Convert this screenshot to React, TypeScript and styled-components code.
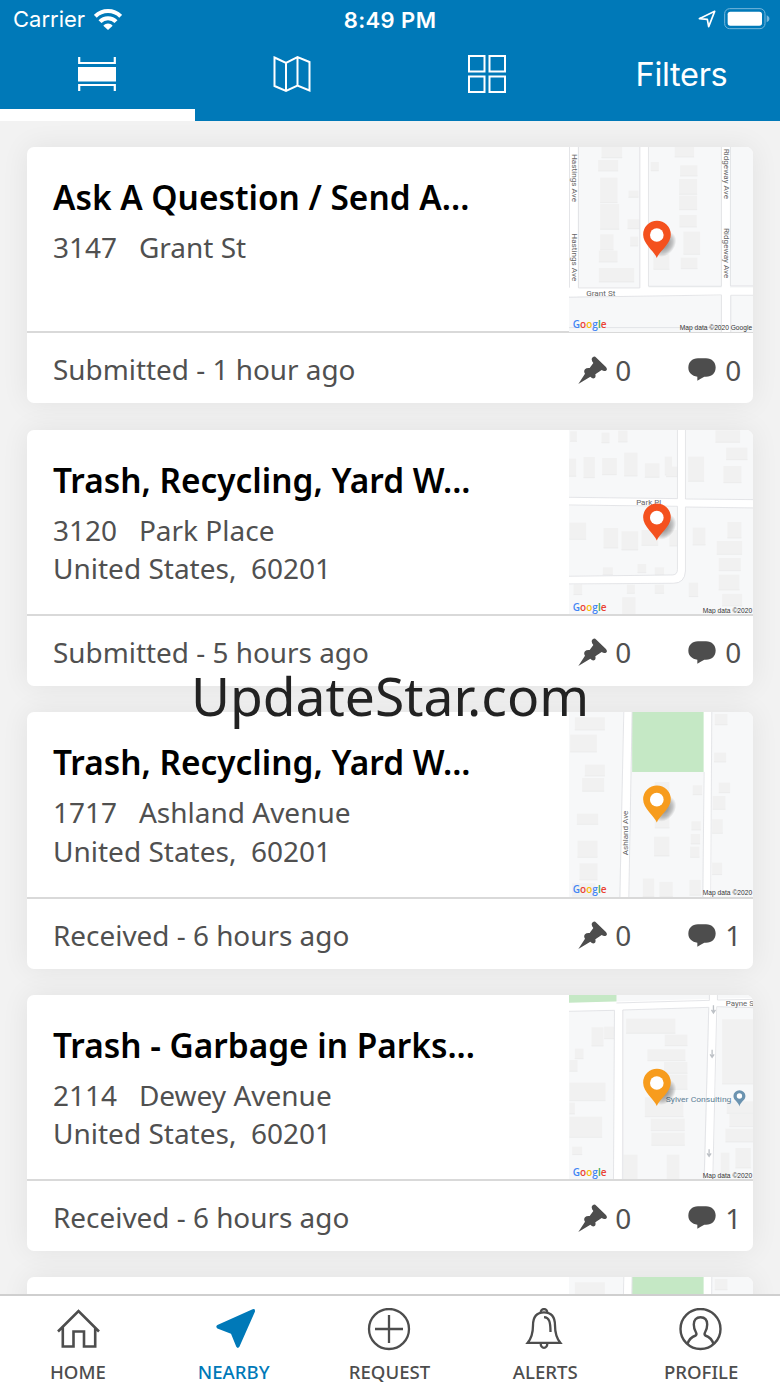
import React from 'react'
import styled, { createGlobalStyle } from 'styled-components'

type Rect = [number, number, number, number]

type MapData = {
  top: number
  blocks: Rect[]
  parks?: Rect[]
  roads: string[]
  edges: string[]
  labels: { x: number; y: number; text: string; rotate?: number; length: number; color?: string }[]
  credit: string
  pin: string
  place?: boolean
}

type Report = {
  id: number
  title: string
  address: string[]
  status: string
  votes: number
  comments: number
  map: MapData
}

const RED = '#f4511e'
const ORANGE = '#f79c1d'

const grantMap: MapData = {
  top: 21,
  blocks: [
    [124, 21, 62, 32], [114, 60, 60, 33], [120, 113, 52, 75], [120, 192, 57, 76], [120, 283, 40, 47],
    [116, 332, 56, 34], [116, 384, 106, 42], [344, 21, 58, 30], [360, 76, 52, 32], [357, 117, 54, 46],
    [357, 167, 54, 42], [358, 225, 52, 36], [370, 275, 50, 68], [362, 353, 50, 33], [280, 342, 48, 46],
    [202, 238, 36, 28], [205, 152, 30, 20], [272, 66, 24, 26], [210, 290, 24, 28],
  ],
  roads: ['M40 21V470', 'M253 21V455', 'M497 21V576', 'M26 456H582'],
  edges: [
    'M28 21V443', 'M55 21V444H239V21', 'M265 21V439H484V21', 'M511 21V438H582', 'M26 472L484 465V576',
    'M582 466H512V576', 'M26 563H484',
  ],
  labels: [
    { x: 35, y: 42, text: 'Hastings Ave', rotate: 90, length: 144 },
    { x: 35, y: 280, text: 'Hastings Ave', rotate: 90, length: 144 },
    { x: 493, y: 26, text: 'Ridgeway Ave', rotate: 90, length: 151 },
    { x: 491, y: 264, text: 'Ridgeway Ave', rotate: 90, length: 151 },
    { x: 78, y: 467, text: 'Grant St', length: 88 },
  ],
  credit: 'Map data ©2020 Google',
  pin: RED,
}

const parkMap: MapData = {
  top: 22,
  blocks: [
    [26, 108, 22, 53], [70, 103, 34, 62], [126, 106, 44, 50], [192, 90, 40, 70], [254, 122, 44, 42],
    [314, 102, 22, 55], [318, 132, 52, 30], [384, 102, 48, 74], [466, 23, 74, 36], [498, 75, 64, 36],
    [490, 130, 54, 50], [28, 300, 50, 50], [130, 316, 44, 60], [184, 326, 50, 56], [244, 322, 50, 46],
    [328, 322, 28, 48], [398, 315, 38, 52], [502, 298, 42, 48], [470, 355, 76, 40], [476, 406, 66, 38],
    [476, 456, 62, 46], [486, 514, 60, 36], [386, 480, 28, 42], [186, 524, 40, 54], [232, 424, 26, 26],
    [284, 434, 28, 24], [128, 434, 30, 22], [40, 484, 26, 32], [200, 486, 24, 26], [284, 486, 28, 26],
    [124, 30, 24, 30], [174, 24, 28, 34], [30, 26, 20, 30],
  ],
  roads: ['M26 236L582 243', 'M364 20V440Q364 470 335 470L26 473'],
  edges: [
    'M26 224L352 228V20', 'M376 20V229L582 231', 'M26 247L352 251V440Q352 456 338 457L26 461',
    'M582 256L376 253V445Q374 482 340 482L26 484',
  ],
  labels: [{ x: 228, y: 248, text: 'Park Pl', length: 75 }],
  credit: 'Map data ©2020',
  pin: RED,
}

const ashlandMap: MapData = {
  top: 22,
  blocks: [
    [44, 38, 90, 38], [30, 90, 80, 52], [74, 180, 60, 34], [66, 220, 66, 40], [50, 327, 64, 32],
    [52, 408, 60, 50], [58, 476, 54, 50], [284, 232, 44, 26], [284, 330, 44, 40], [282, 396, 46, 58],
    [398, 242, 28, 28], [394, 350, 28, 26], [392, 388, 28, 30], [390, 426, 28, 32], [464, 28, 38, 32],
    [462, 144, 36, 28], [476, 234, 34, 30], [458, 274, 38, 40], [456, 344, 32, 42], [456, 474, 30, 36],
    [248, 522, 34, 54], [298, 532, 40, 44], [388, 526, 34, 46], [36, 536, 70, 38],
  ],
  parks: [[216, 22, 216, 180]],
  roads: ['M202 22L194 578', 'M443 22V578'],
  edges: ['M191 22L179 578', 'M216 22L206 578', 'M432 202L428 578', 'M455 22L452 578'],
  labels: [{ x: 204, y: 452, text: 'Ashland Ave', rotate: -90, length: 134 }],
  credit: 'Map data ©2020',
  pin: ORANGE,
}

const deweyMap: MapData = {
  top: 21,
  blocks: [
    [198, 92, 148, 44], [314, 140, 68, 33], [262, 184, 114, 34], [312, 222, 70, 34], [320, 260, 62, 44],
    [254, 328, 116, 58], [272, 392, 102, 36], [274, 434, 100, 38], [28, 284, 108, 54], [28, 386, 98, 62],
    [94, 118, 36, 56], [132, 116, 32, 36], [486, 94, 96, 194], [500, 340, 82, 36], [508, 378, 74, 38],
    [496, 422, 86, 40], [190, 500, 42, 76], [320, 500, 38, 76], [482, 494, 26, 74], [526, 480, 46, 60],
    [28, 216, 24, 34], [44, 182, 26, 30], [28, 344, 16, 34], [36, 476, 30, 24],
  ],
  parks: [[26, 21, 143, 27]],
  roads: ['M26 57L582 42', 'M175 55L172 577', 'M461 21L447 577'],
  edges: [
    'M26 70L163 67L160 577', 'M188 577V66L446 58L432 577', 'M458 577L470 56L582 59', 'M169 45L448 37V21',
    'M472 21V36L582 34',
  ],
  labels: [
    { x: 497, y: 54, text: 'Payne St', length: 92 },
    { x: 317, y: 341, text: 'Sylver Consulting', length: 197, color: '#5d7f97' },
  ],
  credit: 'Map data ©2020',
  pin: ORANGE,
  place: true,
}

const reports: Report[] = [
  {
    id: 1,
    title: 'Ask A Question / Send A...',
    address: ['3147   Grant St'],
    status: 'Submitted - 1 hour ago',
    votes: 0,
    comments: 0,
    map: grantMap,
  },
  {
    id: 2,
    title: 'Trash, Recycling, Yard W...',
    address: ['3120   Park Place', 'United States,  60201'],
    status: 'Submitted - 5 hours ago',
    votes: 0,
    comments: 0,
    map: parkMap,
  },
  {
    id: 3,
    title: 'Trash, Recycling, Yard W...',
    address: ['1717   Ashland Avenue', 'United States,  60201'],
    status: 'Received - 6 hours ago',
    votes: 0,
    comments: 1,
    map: ashlandMap,
  },
  {
    id: 4,
    title: 'Trash - Garbage in Parks...',
    address: ['2114   Dewey Avenue', 'United States,  60201'],
    status: 'Received - 6 hours ago',
    votes: 0,
    comments: 1,
    map: deweyMap,
  },
]

const googleLetters = [
  ['G', '#4285f4'],
  ['o', '#ea4335'],
  ['o', '#fbbc05'],
  ['g', '#4285f4'],
  ['l', '#34a853'],
  ['e', '#ea4335'],
]

const MiniMap = ({ map, bare }: { map: MapData; bare?: boolean }) => (
  <MapSvg viewBox={`26.5 ${map.top} 554 554`}>
    <defs>
      <radialGradient id="pinShadow">
        <stop offset="0.3" stopColor="#000" stopOpacity="0.36" />
        <stop offset="0.7" stopColor="#000" stopOpacity="0.2" />
        <stop offset="1" stopColor="#000" stopOpacity="0" />
      </radialGradient>
    </defs>
    <rect x="20" y="15" width="570" height="570" fill="#f7f8f9" />
    {map.blocks.map(([x, y, width, height], i) => (
      <g key={i}>
        <rect x={x} y={y} width={width} height={height} fill="#f1f1f1" />
        <path d={`M${x} ${y + height}h${width}`} stroke="#e8e8e9" strokeWidth="2" />
      </g>
    ))}
    {map.parks?.map(([x, y, width, height], i) => (
      <rect key={i} x={x} y={y} width={width} height={height} fill="#c5e8c5" />
    ))}
    {map.roads.map((d) => (
      <path key={d} d={d} fill="none" stroke="#fff" strokeWidth="25" />
    ))}
    {map.edges.map((d) => (
      <path key={d} d={d} fill="none" stroke="#dfe0e3" strokeWidth="2.5" />
    ))}
    {map.place && (
      <g>
        <path d="M460 52v22m-6-8l6 9l6-9M456 185v22m-6-8l6 9l6-9M447 484v20m-6-8l6 9l6-9" fill="none" stroke="#bdc1c6" strokeWidth="4" />
        <path d="M538 356c-3-16-18-18-18-32a18 17 0 0 1 36 0c0 14-15 16-18 32z" fill="#6b93b0" />
        <circle cx="538" cy="324" r="8" fill="#fff" />
      </g>
    )}
    {!bare && map.labels.map(({ x, y, text, rotate = 0, length, color }) => (
      <MapLabel
        key={`${x}-${y}`}
        transform={`translate(${x} ${y}) rotate(${rotate})`}
        textLength={length}
        lengthAdjust="spacingAndGlyphs"
        fill={color || '#666'}
      >
        {text}
      </MapLabel>
    ))}
    <ellipse cx="313" cy="313" rx="42" ry="31" fill="url(#pinShadow)" transform="rotate(-52 313 313)" />
    <path d="M290 354c-7-20-41-42-41-70a41.500 41.500 0 0 1 83 0c0 28-35 50-42 70z" fill={map.pin} />
    <circle cx="290" cy="285" r="20.500" fill="#fff" />
    {!bare && (
      <>
        <GoogleMark x="38" y={map.top + 542} textLength="101" lengthAdjust="spacingAndGlyphs">
          {googleLetters.map(([letter, color], i) => (
            <tspan key={i} fill={color}>{letter}</tspan>
          ))}
        </GoogleMark>
        <Credit
          x="576"
          y={map.top + 548}
          textAnchor="end"
          textLength={map.credit.length > 16 ? 217 : 148}
          lengthAdjust="spacingAndGlyphs"
        >
          {map.credit}
        </Credit>
      </>
    )}
  </MapSvg>
)

const PushPin = () => (
  <svg width="29" height="28" viewBox="56 647 87 84" fill="#4d4d4d">
    <path d="M57 731L77 700Q72 693 77 687Q81 682 91 683L102 668Q95 661 98 653Q104 644 111 652L139 679Q146 687 140 691Q134 694 127 689L108 702Q110 710 106 713Q100 717 93 709Z" />
  </svg>
)

const Bubble = () => (
  <svg width="28" height="23" viewBox="386 653 84 69" fill="#4d4d4d">
    <path d="M416 654H440C458 654 469 666 469 681C469 699 458 709 440 709H435Q426 714 414 721V709C398 706 387 697 387 682C387 666 398 654 416 654Z" />
  </svg>
)

const ReportCard = ({ report }: { report: Report }) => {
  const { title, address, status, votes, comments, map } = report

  return (
    <Card>
      <CardTop>
        <CardText>
          <Title>{title}</Title>
          {address.map((line) => (
            <Address key={line}>{line}</Address>
          ))}
        </CardText>
        <MiniMap map={map} />
      </CardTop>
      <CardFooter>
        <Status>{status}</Status>
        <Stat>
          <PushPin />
          <span>{votes}</span>
        </Stat>
        <Stat>
          <Bubble />
          <span>{comments}</span>
        </Stat>
      </CardFooter>
    </Card>
  )
}

const navItems = [
  {
    label: 'HOME',
    icon: (
      <svg width="44" height="44" viewBox="0 0 44 44" fill="none" stroke="currentColor" strokeWidth="2.600">
        <path d="M2 23.500L22.500 3L43 23.500M6.800 19.500V38.500H17.500V23.500H28V38.500H39.200V19.500" />
      </svg>
    ),
  },
  {
    label: 'NEARBY',
    active: true,
    icon: (
      <svg width="44" height="44" viewBox="0 0 44 44" fill="currentColor">
        <path d="M40.600 1.200Q43.500.5 43 3.400L27.400 38.800Q25.800 41 24.300 38.800L19 25.800L5.400 20.400Q3.200 18.500 5.400 16.900Z" />
      </svg>
    ),
  },
  {
    label: 'REQUEST',
    icon: (
      <svg width="44" height="44" viewBox="0 0 44 44" fill="none" stroke="currentColor" strokeWidth="2.300">
        <circle cx="22" cy="21" r="20" />
        <path d="M22 7V35M8 21H36" />
      </svg>
    ),
  },
  {
    label: 'ALERTS',
    icon: (
      <svg width="44" height="44" viewBox="0 0 44 44" fill="none" stroke="currentColor" strokeWidth="2.300">
        <path d="M4.700 34.800C9 29.500 10 25 10 17.500C10 9 14 4.400 21 4.400S32 9 32 17.500C32 25 33 29.500 37.300 34.800Z" />
        <path d="M17.700 4.800C17.300-.2 24.700-.2 24.300 4.800M17.700 35C17.300 41.500 24.700 41.500 24.300 35M21 9.200C26 9.500 27.500 13 27.500 24" />
      </svg>
    ),
  },
  {
    label: 'PROFILE',
    icon: (
      <svg width="44" height="44" viewBox="0 0 44 44" fill="none" stroke="currentColor" strokeWidth="2.400">
        <circle cx="21.500" cy="21" r="20" />
        <path d="M8.500 36.300C10 30.500 13.500 28.500 16.700 27.500Q18 26.500 17 24.500C15.200 21.500 14.800 19 14.800 16.500C14.800 11.500 17.500 9.200 21.500 9.200S28.200 11.500 28.200 16.500C28.200 19 27.800 21.500 26 24.500Q25 26.500 26.300 27.500C29.500 28.500 33 30.500 34.500 36.300" />
      </svg>
    ),
  },
]

const App = () => {
  return (
    <Screen>
      <GlobalStyle />
      <Header>
        <StatusBar>
          <Carrier>
            Carrier
            <svg width="28" height="21" viewBox="0 0 84 63" fill="none" stroke="#fff" strokeWidth="12">
              <path d="M4 22C25 1 59 1 80 22M18 38C31 24 53 24 66 38" />
              <path d="M42 63L28 50C36 41 48 41 56 50Z" fill="#fff" stroke="none" />
            </svg>
          </Carrier>
          <Clock>8:49 PM</Clock>
          <Battery>
            <svg width="18" height="18" viewBox="0 0 54 54" fill="none" stroke="#fff" strokeWidth="5" strokeLinejoin="round">
              <path d="M50 4L4 26L28 28L32 50Z" />
            </svg>
            <svg width="46" height="22" viewBox="0 0 138 66">
              <rect x="2" y="2" width="121" height="60" rx="15" fill="none" stroke="#76b7dc" strokeWidth="3" />
              <rect x="11" y="11" width="103" height="42" rx="8" fill="#fff" />
              <path d="M128 22C139 26 139 39 128 43Z" fill="#76b7dc" />
            </svg>
          </Battery>
        </StatusBar>
        <Tabs>
          <Tab $active>
            <svg width="38" height="36" viewBox="0 0 38 36" fill="none" stroke="#fff" strokeWidth="2.200">
              <path d="M1.200 1V7H36.800V1M1.200 35V29H36.800V35" />
              <path d="M0 11H38V25.500H0Z" fill="#fff" stroke="none" />
            </svg>
          </Tab>
          <Tab>
            <svg width="38" height="38" viewBox="0 0 38 38" fill="none" stroke="#fff" strokeWidth="2">
              <path d="M1.500 2.500L13 8L24.500 2L36.500 7V35.500L24.500 30.500L13 36L1.500 31ZM13 8V36M24.500 2V30.500" />
            </svg>
          </Tab>
          <Tab>
            <svg width="38" height="38" viewBox="0 0 38 38" fill="none" stroke="#fff" strokeWidth="2">
              <path d="M1 1H16.500V16.500H1ZM21.500 1H37V16.500H21.500ZM1 21.500H16.500V37H1ZM21.500 21.500H37V37H21.500Z" />
            </svg>
          </Tab>
          <Tab>Filters</Tab>
        </Tabs>
      </Header>

      <List>
        {reports.map((report) => (
          <ReportCard key={report.id} report={report} />
        ))}
        <Card>
          <CardTop>
            <CardText />
            <MiniMap map={ashlandMap} bare />
          </CardTop>
        </Card>
      </List>

      <BottomNav>
        {navItems.map(({ label, icon, active }) => (
          <NavItem key={label} $active={active}>
            {icon}
            <span>{label}</span>
          </NavItem>
        ))}
      </BottomNav>

      <Watermark>UpdateStar.com</Watermark>
    </Screen>
  )
}

export default App

const GlobalStyle = createGlobalStyle`
  * {
    box-sizing: border-box;
  }

  body {
    margin: 0;
    overflow: hidden;
  }
`

const Screen = styled.div`
  position: relative;
  display: flex;
  flex-direction: column;
  width: 780px;
  height: 1387px;
  overflow: hidden;
  background: #f2f2f2;
  font-family: 'Noto Sans', 'Open Sans', sans-serif;
  color: #505050;

  svg {
    flex-shrink: 0;
  }
`

const Header = styled.header`
  flex: 0 0 121px;
  display: flex;
  flex-direction: column;
  background: #0079b8;
  color: #fff;
  font-family: Inter, sans-serif;
`

const StatusBar = styled.div`
  display: grid;
  grid-template-columns: 1fr auto 1fr;
  align-items: center;
  height: 38px;
  padding: 0 10px 0 13px;
  font-size: 22px;
`

const Carrier = styled.div`
  display: flex;
  align-items: center;
  gap: 9px;
`

const Clock = styled.div`
  padding: 2px 3px 0 0;
  font-weight: 600;
  letter-spacing: 0.4px;
`

const Battery = styled.div`
  display: flex;
  align-items: center;
  justify-content: flex-end;
  gap: 8px;
`

const Tabs = styled.nav`
  flex: 1;
  display: grid;
  grid-template-columns: repeat(4, 1fr);
`

const Tab = styled.div<{ $active?: boolean }>`
  display: flex;
  align-items: center;
  justify-content: center;
  padding: 0 2px ${({ $active }) => ($active ? 0 : 11)}px 0;
  border-bottom: ${({ $active }) => ($active ? '12px solid #fff' : 'none')};
  font-size: 32.500px;
  letter-spacing: -0.3px;
`

const List = styled.main`
  flex: 1;
  display: flex;
  flex-direction: column;
  gap: 26.200px;
  min-height: 0;
  padding: 26px 26.700px 0 27px;
  overflow: hidden;
`

const Card = styled.article`
  flex-shrink: 0;
  border-radius: 7px;
  background: #fff;
  box-shadow: 0 0 28px rgba(0, 0, 0, 0.07);
  overflow: hidden;
`

const CardTop = styled.div`
  display: flex;
  height: 186.400px;
  border-bottom: 2px solid #d9d9d9;
`

const CardText = styled.div`
  flex: 1;
  padding: 27px 0 0 26px;
`

const Title = styled.h2`
  margin: 0 0 8px;
  font-size: 33.400px;
  font-weight: 600;
  line-height: 46px;
  color: #000;
  white-space: nowrap;
`

const Address = styled.p`
  margin: 0;
  font-size: 28px;
  line-height: 38.500px;
  white-space: pre;
`

const MapSvg = styled.svg`
  width: 184.600px;
  height: 184.600px;
`

const MapLabel = styled.text`
  font-family: Roboto, sans-serif;
  font-size: 24px;
`

const GoogleMark = styled.text`
  font-family: 'Open Sans', sans-serif;
  font-size: 32px;
  font-weight: 600;
`

const Credit = styled.text`
  font-family: 'Liberation Sans', Arial, sans-serif;
  font-size: 21px;
  fill: #333;
`

const CardFooter = styled.div`
  display: flex;
  align-items: center;
  height: 70px;
  padding-left: 26px;
`

const Status = styled.div`
  flex: 1;
  padding-top: 2px;
  font-size: 27.900px;
`

const Stat = styled.div`
  display: flex;
  align-items: center;
  justify-content: space-between;
  width: 53px;
  padding-top: 3px;
  margin-right: 57px;
  font-size: 28px;

  &:last-child {
    margin-right: 12px;
  }
`

const BottomNav = styled.nav`
  flex: 0 0 93px;
  display: grid;
  grid-template-columns: repeat(5, 1fr);
  padding-right: 1px;
  border-top: 2px solid #cfcfcf;
  background: #fff;
`

const NavItem = styled.div<{ $active?: boolean }>`
  display: flex;
  flex-direction: column;
  align-items: center;
  padding-top: 12px;
  color: ${({ $active }) => ($active ? '#0079b8' : '#4d4d4d')};
  font-size: 18.600px;
  font-weight: 500;
  line-height: 24px;

  span {
    margin-top: 8px;
  }
`

/* lies over the cards */
const Watermark = styled.div`
  position: absolute;
  top: 661px;
  left: 0;
  width: 100%;
  font-size: 53.400px;
  line-height: 70px;
  text-align: center;
  color: #222;
`
